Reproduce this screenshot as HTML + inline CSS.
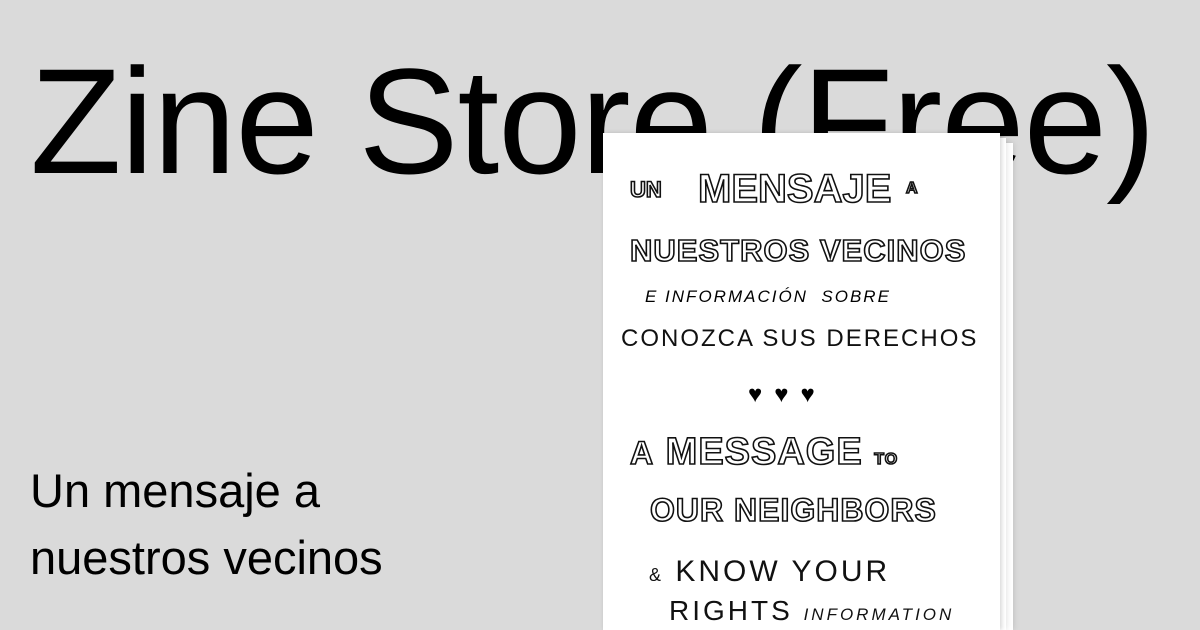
<!DOCTYPE html>
<html><head><meta charset="utf-8"><style>
html,body{margin:0;padding:0}
body{width:1200px;height:630px;overflow:hidden;background:#dadada;position:relative;font-family:"Liberation Sans",sans-serif;color:#000}
.t{position:absolute;left:30px;top:46px;font-size:150px;letter-spacing:-1px;line-height:1;white-space:nowrap}
.s{position:absolute;left:30px;top:457px;font-size:47px;line-height:67px}
.sh{position:absolute;background:#fff;box-shadow:0 0 6px rgba(0,0,0,.15)}
.z{position:absolute;left:603px;top:133px;width:397px;height:497px;background:#fff;box-shadow:2px 0 4px rgba(0,0,0,.15)}
.l{position:absolute;white-space:nowrap;font-family:"Liberation Sans",sans-serif;}
.o{color:transparent;-webkit-text-stroke:1.6px #111;font-weight:bold}
.p{color:#111;font-size:24px;letter-spacing:3px}
</style></head><body>
<div class="t">Zine Store (Free)</div>
<div class="s">Un mensaje a<br>nuestros vecinos</div>
<div class="sh" style="left:610px;top:143px;width:403px;height:487px"></div>
<div class="sh" style="left:606px;top:138px;width:400px;height:492px"></div>
<div class="z">
<div class="l o" style="left:27px;top:44px;font-size:22px">UN</div>
<div class="l o" style="left:95px;top:34px;font-size:40px;letter-spacing:0px">MENSAJE</div>
<div class="l o" style="left:303px;top:47px;font-size:16px">A</div>
<div class="l o" style="left:27px;top:100px;font-size:31px;letter-spacing:1px">NUESTROS VECINOS</div>
<div class="l" style="left:42px;top:154px;font-size:17px;font-style:italic;letter-spacing:2px">E INFORMACIÓN &nbsp;SOBRE</div>
<div class="l p" style="left:18px;top:192px;letter-spacing:2px">CONOZCA SUS DERECHOS</div>
<div class="l" style="left:145px;top:248px;font-size:24px;letter-spacing:12px">♥♥♥</div>
<div class="l o" style="left:27px;top:298px;font-size:38px;letter-spacing:1px"><span style="font-size:32px">A</span> MESSAGE <span style="font-size:16px">TO</span></div>
<div class="l o" style="left:47px;top:359px;font-size:32px;letter-spacing:1px">OUR NEIGHBORS</div>
<div class="l p" style="left:46px;top:422px;font-size:30px"><span style="font-size:18px">&amp;</span> KNOW YOUR</div>
<div class="l p" style="left:66px;top:462px;font-size:28px">RIGHTS <span style="font-size:17px;font-style:italic">INFORMATION</span></div>
</div>
</body></html>
